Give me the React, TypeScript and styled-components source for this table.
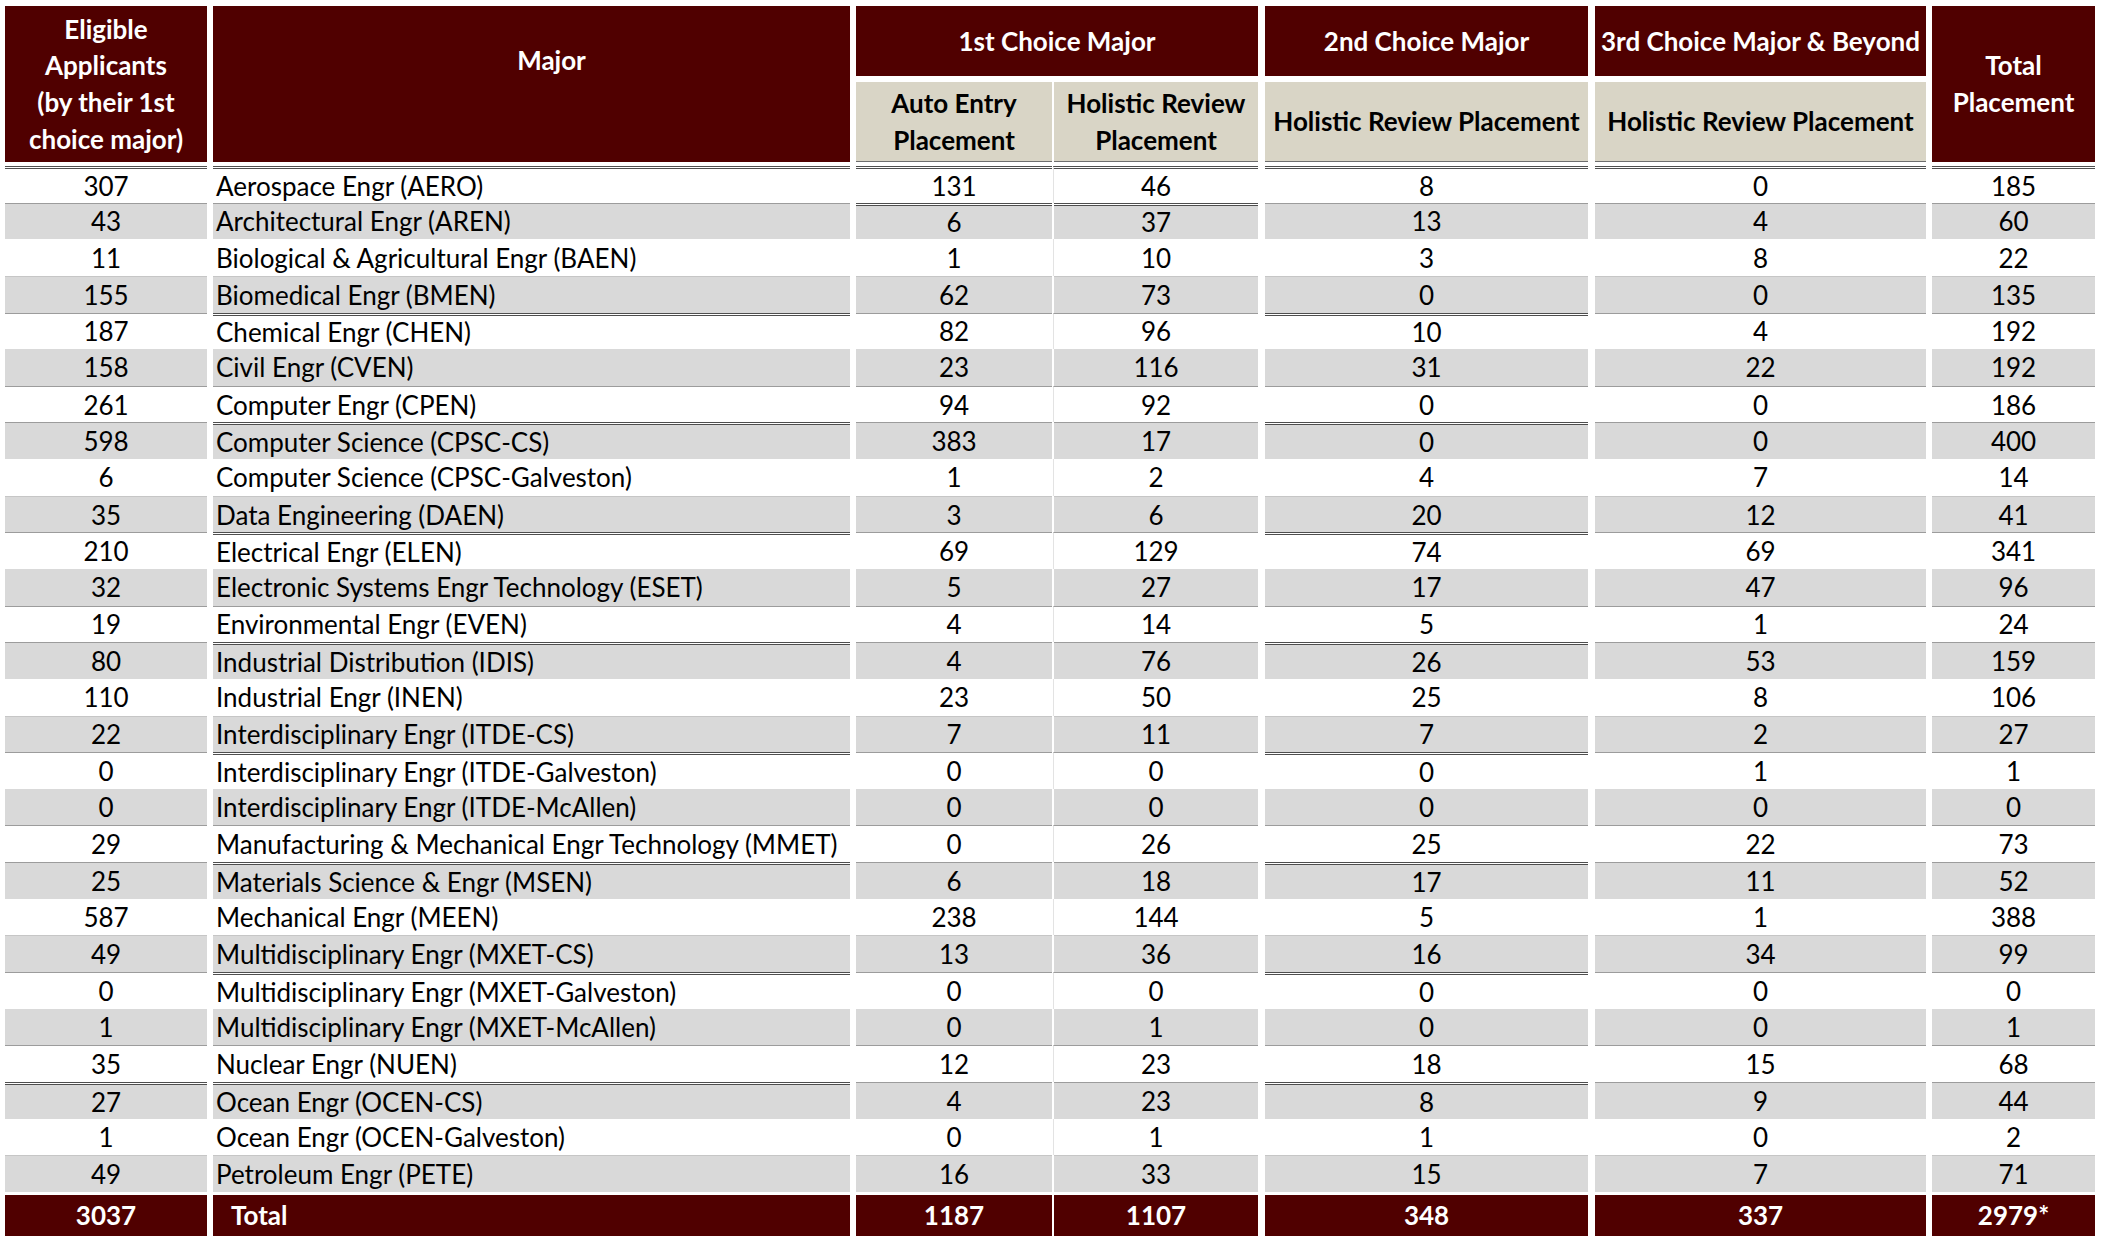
import React from 'react';
import styled, { createGlobalStyle, css } from 'styled-components';

const GlobalStyle = createGlobalStyle`
  html, body {
    margin: 0;
    padding: 0;
    background: #ffffff;
    overflow: hidden;
  }
  body {
    font-family: Lato, "Noto Sans", "Liberation Sans", sans-serif;
    -webkit-font-smoothing: antialiased;
  }
`;

const MAROON = '#500000';
const TAN = '#d9d5c6';
const SHADE = '#d9d9d9';

/* track widths include the white gutter that sits left of each cell */
const COL_TRACKS = '207px 643px 202px 206px 330px 338px 169px';
const COL_GUTTER = [5, 6, 6, 2, 7, 7, 6];

type LineKind = 'none' | 'light' | 'medium' | 'double';

const Sheet = styled.div`
  display: grid;
  grid-template-columns: ${COL_TRACKS};
  grid-template-rows: 76px 86px 40.6px repeat(27, 36.65px) 44px;
  width: 2095px;
  font-size: 26px;
  color: #000000;
  background: #ffffff;
`;

const HeadCell = styled.div<{
  $col: number;
  $rows?: number;
  $cols?: number;
  $tone: 'dark' | 'light';
  $lift?: boolean;
}>`
  grid-column: ${(p) => p.$col + 1} / span ${(p) => p.$cols ?? 1};
  grid-row: span ${(p) => p.$rows ?? 1};
  margin-left: ${(p) => COL_GUTTER[p.$col]}px;
  margin-top: 6px;
  box-sizing: border-box;
  display: flex;
  align-items: center;
  justify-content: center;
  text-align: center;
  font-weight: 700;
  line-height: 36.6px;
  white-space: nowrap;
  ${(p) =>
    p.$tone === 'dark'
      ? css`
          background: ${MAROON};
          color: #ffffff;
        `
      : css`
          background: ${TAN};
          color: #000000;
          border-bottom: 1px solid #6e6e6e;
        `}
  ${(p) =>
    p.$lift &&
    css`
      padding-bottom: 48px;
      padding-left: 40px;
    `}
`;

const lineStyle = (kind: LineKind) => {
  switch (kind) {
    case 'double':
      return css`
        border-top: 3px double #4e4e4e;
      `;
    case 'medium':
      return css`
        border-top: 1px solid #9c9c9c;
      `;
    case 'light':
      return css`
        border-top: 1px solid #c6c6c6;
      `;
    default:
      return css``;
  }
};

const Cell = styled.div<{
  $col: number;
  $shade: boolean;
  $line: LineKind;
  $first?: boolean;
  $left?: boolean;
}>`
  grid-column: ${(p) => p.$col + 1};
  margin-left: ${(p) =>
    p.$col === 3 && !p.$shade ? 1 : COL_GUTTER[p.$col]}px;
  ${(p) =>
    p.$col === 3 &&
    !p.$shade &&
    css`
      border-left: 1px solid #e3e3e3;
    `}
  margin-top: ${(p) => (p.$first ? 4 : 0)}px;
  box-sizing: border-box;
  background: ${(p) => (p.$shade ? SHADE : '#ffffff')};
  background-clip: padding-box;
  ${(p) => lineStyle(p.$line)}
  display: flex;
  align-items: center;
  justify-content: ${(p) => (p.$left ? 'flex-start' : 'center')};
  padding-left: ${(p) => (p.$left ? 3 : 0)}px;
  white-space: nowrap;
  line-height: 1;
`;

const TotalCell = styled.div<{ $col: number; $left?: boolean }>`
  grid-column: ${(p) => p.$col + 1};
  margin-left: ${(p) => COL_GUTTER[p.$col]}px;
  margin-top: 3px;
  background: ${MAROON};
  color: #ffffff;
  font-weight: 700;
  display: flex;
  align-items: center;
  justify-content: ${(p) => (p.$left ? 'flex-start' : 'center')};
  padding-left: ${(p) => (p.$left ? 18 : 0)}px;
  white-space: nowrap;
  line-height: 1;
  box-shadow: 0 3px 0 #ffffff, 0 5px 0 #5a5a5a;
`;

type Row = [number, string, number, number, number, number, number];

const ROWS: Row[] = [
  [307, 'Aerospace Engr (AERO)', 131, 46, 8, 0, 185],
  [43, 'Architectural Engr (AREN)', 6, 37, 13, 4, 60],
  [11, 'Biological & Agricultural Engr (BAEN)', 1, 10, 3, 8, 22],
  [155, 'Biomedical Engr (BMEN)', 62, 73, 0, 0, 135],
  [187, 'Chemical Engr (CHEN)', 82, 96, 10, 4, 192],
  [158, 'Civil Engr (CVEN)', 23, 116, 31, 22, 192],
  [261, 'Computer Engr (CPEN)', 94, 92, 0, 0, 186],
  [598, 'Computer Science (CPSC-CS)', 383, 17, 0, 0, 400],
  [6, 'Computer Science (CPSC-Galveston)', 1, 2, 4, 7, 14],
  [35, 'Data Engineering (DAEN)', 3, 6, 20, 12, 41],
  [210, 'Electrical Engr (ELEN)', 69, 129, 74, 69, 341],
  [32, 'Electronic Systems Engr Technology (ESET)', 5, 27, 17, 47, 96],
  [19, 'Environmental Engr (EVEN)', 4, 14, 5, 1, 24],
  [80, 'Industrial Distribution (IDIS)', 4, 76, 26, 53, 159],
  [110, 'Industrial Engr (INEN)', 23, 50, 25, 8, 106],
  [22, 'Interdisciplinary Engr (ITDE-CS)', 7, 11, 7, 2, 27],
  [0, 'Interdisciplinary Engr (ITDE-Galveston)', 0, 0, 0, 1, 1],
  [0, 'Interdisciplinary Engr (ITDE-McAllen)', 0, 0, 0, 0, 0],
  [29, 'Manufacturing & Mechanical Engr Technology (MMET)', 0, 26, 25, 22, 73],
  [25, 'Materials Science & Engr (MSEN)', 6, 18, 17, 11, 52],
  [587, 'Mechanical Engr (MEEN)', 238, 144, 5, 1, 388],
  [49, 'Multidisciplinary Engr (MXET-CS)', 13, 36, 16, 34, 99],
  [0, 'Multidisciplinary Engr (MXET-Galveston)', 0, 0, 0, 0, 0],
  [1, 'Multidisciplinary Engr (MXET-McAllen)', 0, 1, 0, 0, 1],
  [35, 'Nuclear Engr (NUEN)', 12, 23, 18, 15, 68],
  [27, 'Ocean Engr (OCEN-CS)', 4, 23, 8, 9, 44],
  [1, 'Ocean Engr (OCEN-Galveston)', 0, 1, 1, 0, 2],
  [49, 'Petroleum Engr (PETE)', 16, 33, 15, 7, 71],
];

const TOTALS = ['3037', 'Total', '1187', '1107', '348', '337', '2979*'];

const lineFor = (row: number, col: number): LineKind => {
  if (row === 0) return 'double';
  const m = row % 3;
  if (m === 2) return 'none';
  if (m === 0) return row % 6 === 0 ? 'medium' : 'light';
  const darkCols = row === 1 ? [2, 3] : row === 25 ? [0, 1, 4] : [1, 4];
  return darkCols.includes(col) ? 'double' : 'medium';
};

export default function App() {
  return (
    <>
      <GlobalStyle />
      <Sheet>
        <HeadCell $col={0} $rows={2} $tone="dark">
          Eligible
          <br />
          Applicants
          <br />
          (by their 1st
          <br />
          choice major)
        </HeadCell>
        <HeadCell $col={1} $rows={2} $tone="dark" $lift>
          Major
        </HeadCell>
        <HeadCell $col={2} $cols={2} $tone="dark">
          1st Choice Major
        </HeadCell>
        <HeadCell $col={4} $tone="dark">
          2nd Choice Major
        </HeadCell>
        <HeadCell $col={5} $tone="dark">
          3rd Choice Major &amp; Beyond
        </HeadCell>
        <HeadCell $col={6} $rows={2} $tone="dark">
          Total
          <br />
          Placement
        </HeadCell>
        <HeadCell $col={2} $tone="light">
          Auto Entry
          <br />
          Placement
        </HeadCell>
        <HeadCell $col={3} $tone="light">
          Holistic Review
          <br />
          Placement
        </HeadCell>
        <HeadCell $col={4} $tone="light">
          Holistic Review Placement
        </HeadCell>
        <HeadCell $col={5} $tone="light">
          Holistic Review Placement
        </HeadCell>

        {ROWS.map((row, r) => (
          <React.Fragment key={row[1]}>
            {row.map((value, c) => (
              <Cell
                key={c}
                $col={c}
                $shade={r % 2 === 1}
                $line={lineFor(r, c)}
                $first={r === 0}
                $left={c === 1}
              >
                {value}
              </Cell>
            ))}
          </React.Fragment>
        ))}

        {TOTALS.map((value, c) => (
          <TotalCell key={c} $col={c} $left={c === 1}>
            {value}
          </TotalCell>
        ))}
      </Sheet>
    </>
  );
}
